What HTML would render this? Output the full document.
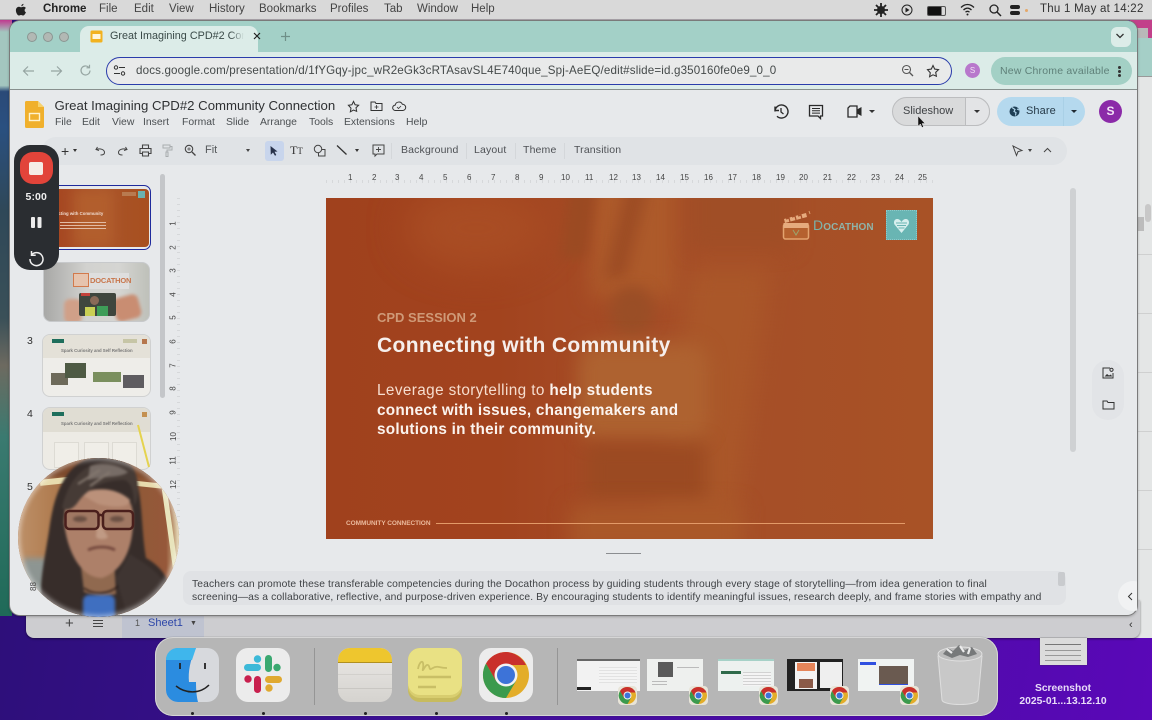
<!DOCTYPE html>
<html><head><meta charset="utf-8"><style>
html,body{margin:0;padding:0;width:1152px;height:720px;overflow:hidden;background:#3c0a9c;font-family:"Liberation Sans",sans-serif}
.a{position:absolute}
.t{position:absolute;white-space:nowrap}
svg{position:absolute;overflow:visible}
#root{filter:blur(.35px)}
</style></head><body>
<div id="root" class="a" style="left:0;top:0;width:1152px;height:720px;overflow:hidden">
<!-- wallpaper -->
<div class="a" style="left:0;top:20px;width:1152px;height:700px;background:linear-gradient(100deg,#2a0f74 0%,#3b0f92 40%,#5a08b8 100%)"></div>
<div class="a" style="left:1130px;top:20px;width:22px;height:40px;background:#c2408a"></div>
<div class="a" style="left:0;top:20px;width:12px;height:596px;background:linear-gradient(180deg,#c0398f 0,#a3c6bf 2%,#a3c6bf 11%,#2a4a78 12%,#2a5080 18%,#2f4858 32%,#3a5058 50%,#6d6a60 58%,#3a7a70 70%,#1f6a58 100%)"></div>
<!-- back windows -->
<div class="a" style="left:1130px;top:38px;width:22px;height:600px;background:#e4e6e6;border-radius:8px 0 0 0"></div>
<div class="a" style="left:1130px;top:28px;width:18px;height:10px;background:#b9b9b9"></div>
<div class="a" style="left:1130px;top:38px;width:22px;height:38px;background:#a5cfc7"></div>
<div class="a" style="left:1130px;top:76px;width:22px;height:1px;background:#999"></div>
<div class="a" style="left:1138px;top:217px;width:6px;height:14px;background:#bcbcbc"></div>
<div class="a" style="left:1145px;top:204px;width:6px;height:18px;background:#c8c8c8;border-radius:3px"></div>
<div class="a" style="left:1138px;top:196px;width:14px;height:400px;background:repeating-linear-gradient(transparent 0 58px,#cfd0d0 58px 59px)"></div>
<div class="a" style="left:26px;top:600px;width:1114px;height:38px;background:#cdcdd0;border-radius:0 0 8px 8px;box-shadow:0 1px 2px #0007"></div>
<div class="a" style="left:122px;top:612px;width:82px;height:26px;background:#bfc3d0"></div>
<div class="t" style="left:65px;top:615px;font-size:15px;color:#444">+</div>
<div class="a" style="left:93px;top:620px;width:10px;height:1px;background:#444;box-shadow:0 3px 0 #444,0 6px 0 #444"></div>
<div class="t" style="left:135px;top:618px;font-size:9px;color:#555">1</div>
<div class="t" style="left:148px;top:617px;font-size:11px;color:#2d46a8">Sheet1</div>
<div class="t" style="left:190px;top:620px;font-size:7px;color:#444">▼</div>
<div class="t" style="left:1129px;top:619px;font-size:11px;color:#333">‹</div>
<!-- menu bar -->
<div class="a" style="left:0;top:0;width:1152px;height:20px;background:#d9d9d9;border-bottom:1px solid #a9a2a8;box-sizing:border-box"></div>
<svg style="left:15px;top:3px" width="12" height="13" viewBox="0 0 12 14"><path d="M8.700 1c.1 1-.9 2.400-2.300 2.500C6.200 2.200 7.500 1 8.700 1zM11.300 10c-.6 1.600-1.800 3.500-3 3.500-.9 0-1.200-.6-2.300-.6s-1.400.6-2.300.6C2.200 13.500.5 10.500.5 8c0-2.500 1.600-4 3.200-4 1 0 1.800.6 2.400.6.600 0 1.500-.7 2.700-.6.500 0 1.800.2 2.500 1.400-2 1.300-1.700 3.800 0 4.600z" fill="#222"/></svg>
<div class="t" style="left:43px;top:3px;font-size:11.500px;font-weight:bold;color:#222">Chrome</div>
<div class="t" style="left:99px;top:3px;font-size:11.500px;color:#444">File</div>
<div class="t" style="left:134px;top:3px;font-size:11.500px;color:#444">Edit</div>
<div class="t" style="left:169px;top:3px;font-size:11.500px;color:#444">View</div>
<div class="t" style="left:209px;top:3px;font-size:11.500px;color:#444">History</div>
<div class="t" style="left:259px;top:3px;font-size:11.500px;color:#444">Bookmarks</div>
<div class="t" style="left:330px;top:3px;font-size:11.500px;color:#444">Profiles</div>
<div class="t" style="left:384px;top:3px;font-size:11.500px;color:#444">Tab</div>
<div class="t" style="left:417px;top:3px;font-size:11.500px;color:#444">Window</div>
<div class="t" style="left:471px;top:3px;font-size:11.500px;color:#444">Help</div>
<svg style="left:872px;top:1px" width="18" height="18" viewBox="0 0 18 18"><circle cx="9" cy="9" r="4" fill="#222"/><path d="M9 2v14M2 9h14M4 4l10 10M14 4L4 14" stroke="#222" stroke-width="1.800"/></svg>
<svg style="left:900px;top:3px" width="14" height="14" viewBox="0 0 14 14"><circle cx="7" cy="7" r="5" fill="none" stroke="#222" stroke-width="1"/><path d="M5.500 4.500l4 2.500-4 2.500z" fill="#222"/></svg>
<div class="a" style="left:927px;top:6px;width:17px;height:8px;border:1px solid #555;border-radius:2px;background:linear-gradient(90deg,#111 80%,transparent 80%)"></div>
<svg style="left:960px;top:3px" width="15" height="13" viewBox="0 0 15 13"><path d="M1 4.500c4-4 9-4 13 0M3.500 7c2.500-2.500 5.500-2.500 8 0M5.500 9.200c1.300-1.200 2.700-1.200 4 0" fill="none" stroke="#222" stroke-width="1.300"/><circle cx="7.500" cy="11.500" r="1" fill="#222"/></svg>
<svg style="left:988px;top:3px" width="14" height="14" viewBox="0 0 14 14"><circle cx="6" cy="6" r="4" fill="none" stroke="#222" stroke-width="1.300"/><path d="M9 9l4 4" stroke="#222" stroke-width="1.500"/></svg>
<div class="a" style="left:1010px;top:5px;width:10px;height:4px;background:#222;border-radius:2px"></div>
<div class="a" style="left:1010px;top:11px;width:10px;height:4px;background:#222;border-radius:2px"></div>
<div class="a" style="left:1025px;top:9px;width:3px;height:3px;background:#e5a86a;border-radius:50%"></div>
<div class="t" style="left:1040px;top:3px;font-size:11.500px;color:#333;letter-spacing:.25px">Thu 1 May at  14:22</div>
<!-- chrome window -->
<div class="a" style="left:10px;top:21px;width:1127px;height:594px;border-radius:10px;background:#e7e9eb;box-shadow:0 0 0 1px #7a7a7a,0 1px 3px #0006;overflow:hidden">
 <div class="a" style="left:0;top:0;width:1127px;height:31px;background:#a3d0c7"></div>
 <div class="a" style="left:0;top:31px;width:1127px;height:37px;background:#dcece8;border-bottom:1px solid #88908e"></div>
 <div class="a" style="left:70px;top:5px;width:178px;height:27px;background:#dcece8;border-radius:9px 9px 0 0"></div>
 <div class="a" style="left:1101px;top:6px;width:20px;height:20px;background:#dcece8;border-radius:6px"></div>
</div>
<div class="a" style="left:27px;top:31.500px;width:10px;height:10px;border-radius:50%;background:#b2b8b4;border:1px solid #8b9692;box-sizing:border-box"></div>
<div class="a" style="left:43px;top:31.500px;width:10px;height:10px;border-radius:50%;background:#b2b8b4;border:1px solid #8b9692;box-sizing:border-box"></div>
<div class="a" style="left:59px;top:31.500px;width:10px;height:10px;border-radius:50%;background:#b2b8b4;border:1px solid #8b9692;box-sizing:border-box"></div>
<svg style="left:90px;top:30px" width="13" height="13" viewBox="0 0 13 13"><rect x=".5" y=".5" width="12" height="12" rx="1.500" fill="#f2b21f"/><rect x="2.500" y="4" width="8" height="5" fill="#fff6dc"/></svg>
<div class="t" style="left:110px;top:30px;font-size:10.800px;color:#3a4a48;width:134px;overflow:hidden;-webkit-mask-image:linear-gradient(90deg,#000 90%,transparent)">Great Imagining CPD#2 Community</div>
<svg style="left:252.500px;top:32px" width="8" height="8" viewBox="0 0 8 8"><path d="M1 1l6 6M7 1L1 7" stroke="#222" stroke-width="1.200"/></svg>
<svg style="left:280px;top:31px" width="11" height="11" viewBox="0 0 11 11"><path d="M5.500 1v9M1 5.500h9" stroke="#6f8f88" stroke-width="1.200"/></svg>
<svg style="left:1115px;top:32px" width="10" height="8" viewBox="0 0 10 8"><path d="M1.500 2l3.500 3.500L8.500 2" stroke="#333" fill="none" stroke-width="1.300"/></svg>
<!-- toolbar -->
<svg style="left:22px;top:65px" width="13" height="12" viewBox="0 0 13 12"><path d="M12 6H2M6 1.500L1.500 6 6 10.500" fill="none" stroke="#96a5a2" stroke-width="1.200"/></svg>
<svg style="left:50px;top:65px" width="13" height="12" viewBox="0 0 13 12"><path d="M1 6h10M7 1.500L11.500 6 7 10.500" fill="none" stroke="#96a5a2" stroke-width="1.200"/></svg>
<svg style="left:79px;top:64px" width="13" height="13" viewBox="0 0 13 13"><path d="M11 6.500a4.500 4.500 0 1 1-1.300-3.200M10.500 .8v3H7.500" fill="none" stroke="#96a5a2" stroke-width="1.200"/></svg>
<div class="a" style="left:106px;top:57px;width:846px;height:28px;background:#e9eaea;border:1px solid #2a3cab;border-radius:14px;box-sizing:border-box"></div>
<svg style="left:113px;top:65px" width="13" height="11" viewBox="0 0 13 11"><circle cx="3" cy="2.500" r="1.700" fill="none" stroke="#333"/><path d="M6 2.500h6M1 8.500h6" stroke="#333"/><circle cx="10" cy="8.500" r="1.700" fill="none" stroke="#333"/></svg>
<div class="t" style="left:136px;top:64px;font-size:11.600px;color:#454a4a;letter-spacing:.15px">docs.google.com/presentation/d/1fYGqy-jpc_wR2eGk3cRTAsavSL4E740que_Spj-AeEQ/edit#slide=id.g350160fe0e9_0_0</div>
<svg style="left:901px;top:64px" width="13" height="13" viewBox="0 0 13 13"><circle cx="5.500" cy="5.500" r="4" fill="none" stroke="#555" stroke-width="1.100"/><path d="M8.500 8.500l3.500 3.500" stroke="#555" stroke-width="1.300"/><path d="M3.500 5.500h4" stroke="#555"/></svg>
<svg style="left:926px;top:64px" width="14" height="14" viewBox="0 0 14 14"><path d="M7 1.500l1.700 3.600 3.800.5-2.800 2.700.7 3.900L7 10.800l-3.400 1.900.7-3.900L1.500 5.600l3.800-.5z" fill="none" stroke="#333" stroke-width="1.100"/></svg>
<div class="a" style="left:965px;top:63px;width:15px;height:15px;border-radius:50%;background:#b878cc;color:#f0e0f4;font-size:8px;text-align:center;line-height:15px">S</div>
<div class="a" style="left:991px;top:57px;width:141px;height:28px;border-radius:14px;background:#a3d0c5"></div>
<div class="t" style="left:1000px;top:65px;font-size:10.500px;color:#5f8079;letter-spacing:.2px">New Chrome available</div>
<div class="a" style="left:1118px;top:66px;width:3px;height:3px;border-radius:50%;background:#333;box-shadow:0 4px 0 #333,0 8px 0 #333"></div>
<!-- docs header -->
<svg style="left:25px;top:101px" width="19" height="27" viewBox="0 0 19 27"><path d="M1.500 0H13l6 6v19.500a1.500 1.500 0 0 1-1.500 1.500h-16A1.500 1.500 0 0 1 0 25.500V1.500A1.500 1.500 0 0 1 1.500 0z" fill="#f0b02c"/><path d="M13 0l6 6h-6z" fill="#f7d26c"/><rect x="4.500" y="12.500" width="10" height="7" fill="none" stroke="#fff3cf" stroke-width="1.400"/></svg>
<div class="t" style="left:54.500px;top:98px;font-size:13.200px;color:#2f3133">Great Imagining CPD#2 Community Connection</div>
<svg style="left:347px;top:100px" width="13" height="13" viewBox="0 0 14 14"><path d="M7 1.500l1.700 3.600 3.800.5-2.800 2.700.7 3.900L7 10.800l-3.400 1.900.7-3.900L1.500 5.600l3.800-.5z" fill="none" stroke="#333" stroke-width="1.100"/></svg>
<svg style="left:370px;top:100px" width="13" height="12" viewBox="0 0 13 12"><path d="M1 2h4l1 1.500h6V10.500H1z" fill="none" stroke="#333"/><path d="M6.500 5v4M4.500 7h4" stroke="#333" stroke-width=".8"/></svg>
<svg style="left:392px;top:100px" width="14" height="12" viewBox="0 0 14 12"><path d="M3.500 10.500a2.700 2.700 0 0 1-.3-5.400 3.800 3.800 0 0 1 7.200-.8 3.100 3.100 0 0 1 .4 6.200z" fill="none" stroke="#333"/><path d="M5 7l1.500 1.500L9 6" fill="none" stroke="#333" stroke-width=".8"/></svg>
<div class="t" style="left:55px;top:117px;font-size:10.400px;color:#4b4f52">File</div>
<div class="t" style="left:82px;top:117px;font-size:10.400px;color:#4b4f52">Edit</div>
<div class="t" style="left:112px;top:117px;font-size:10.400px;color:#4b4f52">View</div>
<div class="t" style="left:143px;top:117px;font-size:10.400px;color:#4b4f52">Insert</div>
<div class="t" style="left:182px;top:117px;font-size:10.400px;color:#4b4f52">Format</div>
<div class="t" style="left:226px;top:117px;font-size:10.400px;color:#4b4f52">Slide</div>
<div class="t" style="left:260px;top:117px;font-size:10.400px;color:#4b4f52">Arrange</div>
<div class="t" style="left:309px;top:117px;font-size:10.400px;color:#4b4f52">Tools</div>
<div class="t" style="left:344px;top:117px;font-size:10.400px;color:#4b4f52">Extensions</div>
<div class="t" style="left:406px;top:117px;font-size:10.400px;color:#4b4f52">Help</div>
<!-- top right -->
<svg style="left:772px;top:103px" width="17" height="17" viewBox="0 0 17 17"><path d="M2.500 8.500a6.500 6.500 0 1 1 2 4.700M2.500 3.500v4h4" fill="none" stroke="#2a2a2a" stroke-width="1.400" transform="translate(.5)"/><path d="M9 5v4l2.500 2" fill="none" stroke="#2a2a2a" stroke-width="1.300"/></svg>
<svg style="left:808px;top:104px" width="16" height="16" viewBox="0 0 16 16"><path d="M1.500 1.500h13v10.500h-2v2.500l-2.500-2.500H1.500z" fill="none" stroke="#2a2a2a" stroke-width="1.300"/><path d="M4 4.500h8M4 6.800h8M4 9.100h8" stroke="#2a2a2a"/></svg>
<svg style="left:847px;top:105px" width="16" height="13" viewBox="0 0 16 13"><path d="M3 1h7v11H1V3z" fill="none" stroke="#2a2a2a" stroke-width="1.300"/><path d="M10 4.500l4.500-2.500v9L10 8.500z" fill="#2a2a2a"/></svg>
<div class="a" style="left:869px;top:110px;border:3px solid transparent;border-top:3.500px solid #333"></div>
<div class="a" style="left:892px;top:97px;width:98px;height:29px;border-radius:15px;background:#d9dadb;border:1px solid #bcbdbf;box-sizing:border-box"></div>
<div class="a" style="left:965px;top:97px;width:25px;height:29px;border-radius:0 15px 15px 0;background:#e3e4e6;border:1px solid #bcbdbf;box-sizing:border-box"></div>
<div class="t" style="left:903px;top:105px;font-size:11px;color:#3f4245">Slideshow</div>
<div class="a" style="left:974px;top:110px;border:3px solid transparent;border-top:3.500px solid #333"></div>
<svg style="left:917px;top:115px" width="10" height="14" viewBox="0 0 10 14"><path d="M1 1v10l2.500-2 1.500 3.500 1.500-.7L5 8.500h3z" fill="#111" stroke="#ddd" stroke-width=".5"/></svg>
<div class="a" style="left:997px;top:97px;width:88px;height:29px;border-radius:15px;background:#b5d9ee"></div>
<div class="a" style="left:1063px;top:97px;width:1px;height:29px;background:#a9d0e6"></div>
<svg style="left:1009px;top:106px" width="11" height="11" viewBox="0 0 11 11"><circle cx="5.500" cy="5.500" r="5" fill="#1f3f55"/><path d="M3 1.500l3 2-1 2 2 1-.5 3M8 3l2 1" stroke="#b5d9ee" stroke-width="1.100" fill="none"/></svg>
<div class="t" style="left:1026px;top:105px;font-size:11px;color:#263a48;letter-spacing:.1px">Share</div>
<div class="a" style="left:1071px;top:110px;border:3px solid transparent;border-top:3.500px solid #1f2a32"></div>
<div class="a" style="left:1099px;top:100px;width:23px;height:23px;border-radius:50%;background:#8b2aa8;color:#f2e4f6;font-size:12px;font-weight:bold;text-align:center;line-height:23px">S</div>
<!-- format bar -->
<div class="a" style="left:42px;top:137px;width:1025px;height:28px;border-radius:14px;background:#e0e3e6"></div>
<div class="t" style="left:61px;top:143px;font-size:14px;color:#333">+</div>
<div class="a" style="left:73px;top:149px;border:2.500px solid transparent;border-top:3px solid #333"></div>
<svg style="left:95px;top:146px" width="11" height="10" viewBox="0 0 11 10"><path d="M2.500 1L1 3.500l3 1M1.500 3.500C5 2 9.500 3.500 9.500 6.500c0 2-2 2.500-4 2.500" fill="none" stroke="#444"/></svg>
<svg style="left:117px;top:146px" width="11" height="10" viewBox="0 0 11 10"><path d="M8.500 1L10 3.500l-3 1M9.500 3.500C6 2 1.500 3.500 1.500 6.500c0 2 2 2.500 4 2.500" fill="none" stroke="#444"/></svg>
<svg style="left:139px;top:144px" width="13" height="13" viewBox="0 0 13 13"><path d="M3.500 4V1h6v3M3.500 9.500H1V4.500h11v5H9.500M3.500 8h6v4h-6z" fill="none" stroke="#444" stroke-width="1.100"/></svg>
<svg style="left:162px;top:144px" width="11" height="13" viewBox="0 0 11 13"><path d="M1 1h7v3H1zM8 2.500h2V6H5v2M4 8h2v4.500H4z" fill="none" stroke="#a9acaf"/></svg>
<svg style="left:184px;top:144px" width="12" height="12" viewBox="0 0 12 12"><circle cx="5" cy="5" r="3.700" fill="none" stroke="#444" stroke-width="1.100"/><path d="M8 8l3.500 3.500" stroke="#444" stroke-width="1.300"/><path d="M3.200 5h3.600M5 3.200v3.600" stroke="#444" stroke-width=".7"/></svg>
<div class="t" style="left:205px;top:144px;font-size:11px;color:#55585b">Fit</div>
<div class="a" style="left:246px;top:149px;border:2.500px solid transparent;border-top:3px solid #444"></div>
<div class="a" style="left:265px;top:141px;width:19px;height:20px;border-radius:3px;background:#c8d5ec"></div>
<svg style="left:269px;top:145px" width="10" height="12" viewBox="0 0 10 12"><path d="M1.500 1l7 5.500-3 .3 1.800 3.200-1.300.7L4 7.500 1.800 9.800z" fill="#28324a"/></svg>
<div class="t" style="left:290px;top:143px;font-size:12px;color:#333;font-family:'Liberation Serif',serif">T<span style="font-size:9px">T</span></div>
<svg style="left:313px;top:144px" width="13" height="13" viewBox="0 0 13 13"><circle cx="5" cy="5" r="3.700" fill="none" stroke="#444"/><path d="M9 5.500h3v6.500H5.500V9" fill="none" stroke="#444"/></svg>
<svg style="left:336px;top:144px" width="12" height="12" viewBox="0 0 12 12"><path d="M1 1.500l9.500 9" stroke="#333" stroke-width="1.300"/></svg>
<div class="a" style="left:355px;top:149px;border:2.500px solid transparent;border-top:3px solid #333"></div>
<svg style="left:372px;top:144px" width="13" height="13" viewBox="0 0 13 13"><path d="M1 1h11v9H5l-2 2v-2H1z" fill="none" stroke="#444"/><path d="M6.500 3v5M4 5.500h5" stroke="#444" stroke-width=".9"/></svg>
<div class="a" style="left:391px;top:143px;width:1px;height:16px;background:#d4d7da"></div>
<div class="t" style="left:401px;top:144px;font-size:10.500px;color:#4e5155;letter-spacing:.15px">Background</div>
<div class="a" style="left:466px;top:143px;width:1px;height:16px;background:#d4d7da"></div>
<div class="t" style="left:474px;top:144px;font-size:10.500px;color:#4e5155;letter-spacing:.15px">Layout</div>
<div class="a" style="left:515px;top:143px;width:1px;height:16px;background:#d4d7da"></div>
<div class="t" style="left:523px;top:144px;font-size:10.500px;color:#4e5155;letter-spacing:.15px">Theme</div>
<div class="a" style="left:564px;top:143px;width:1px;height:16px;background:#d4d7da"></div>
<div class="t" style="left:574px;top:144px;font-size:10.500px;color:#4e5155;letter-spacing:.15px">Transition</div>
<svg style="left:1012px;top:145px" width="11" height="11" viewBox="0 0 11 11"><path d="M1 1l9 4.500-4 1.200L4.500 10.500z" fill="none" stroke="#444"/></svg>
<div class="a" style="left:1028px;top:149px;border:2.500px solid transparent;border-top:3px solid #444"></div>
<svg style="left:1043px;top:147px" width="9" height="6" viewBox="0 0 9 6"><path d="M1 5l3.500-3.500L8 5" fill="none" stroke="#444"/></svg>
<!-- rulers -->
<div class="a" style="left:326px;top:180px;width:607px;height:3px;background:repeating-linear-gradient(90deg,#d6d8da 0 1px,transparent 1px 6px)"></div>
<div class="t" style="left:348px;top:172.500px;font-size:8px;color:#444;width:600px"><span class="t" style="left:0">1</span><span class="t" style="left:24px">2</span><span class="t" style="left:47px">3</span><span class="t" style="left:71px">4</span><span class="t" style="left:95px">5</span><span class="t" style="left:119px">6</span><span class="t" style="left:143px">7</span><span class="t" style="left:167px">8</span><span class="t" style="left:191px">9</span><span class="t" style="left:213px">10</span><span class="t" style="left:237px">11</span><span class="t" style="left:261px">12</span><span class="t" style="left:284px">13</span><span class="t" style="left:308px">14</span><span class="t" style="left:332px">15</span><span class="t" style="left:356px">16</span><span class="t" style="left:380px">17</span><span class="t" style="left:404px">18</span><span class="t" style="left:428px">19</span><span class="t" style="left:451px">20</span><span class="t" style="left:475px">21</span><span class="t" style="left:499px">22</span><span class="t" style="left:523px">23</span><span class="t" style="left:547px">24</span><span class="t" style="left:570px">25</span></div>
<div class="a" style="left:177px;top:198px;width:3px;height:341px;background:repeating-linear-gradient(#d6d8da 0 1px,transparent 1px 6px)"></div>
<div class="t" style="left:166px;top:213px;font-size:8px;color:#444;height:300px">
<span class="t" style="left:5px;top:6px;transform:rotate(-90deg)">1</span><span class="t" style="left:5px;top:30px;transform:rotate(-90deg)">2</span><span class="t" style="left:5px;top:53px;transform:rotate(-90deg)">3</span><span class="t" style="left:5px;top:77px;transform:rotate(-90deg)">4</span><span class="t" style="left:5px;top:100px;transform:rotate(-90deg)">5</span><span class="t" style="left:5px;top:124px;transform:rotate(-90deg)">6</span><span class="t" style="left:5px;top:148px;transform:rotate(-90deg)">7</span><span class="t" style="left:5px;top:171px;transform:rotate(-90deg)">8</span><span class="t" style="left:5px;top:195px;transform:rotate(-90deg)">9</span><span class="t" style="left:3px;top:219px;transform:rotate(-90deg)">10</span><span class="t" style="left:3px;top:243px;transform:rotate(-90deg)">11</span><span class="t" style="left:3px;top:267px;transform:rotate(-90deg)">12</span></div>
<div class="a" style="left:160px;top:174px;width:5px;height:224px;border-radius:3px;background:#c4c6c9"></div>
<div class="a" style="left:1070px;top:188px;width:6px;height:264px;border-radius:3px;background:#cfd1d3"></div>
<!-- side tools -->
<div class="a" style="left:1092px;top:360px;width:32px;height:60px;border-radius:16px;background:#e2e4e7"></div>
<svg style="left:1102px;top:367px" width="13" height="12" viewBox="0 0 13 12"><path d="M8 1H1v10h10V6" fill="none" stroke="#333"/><circle cx="9.500" cy="2.800" r="1.600" fill="none" stroke="#333"/><path d="M2.500 9.500l2.500-2.500 2 1.500 2-1 1 2z" fill="#333"/></svg>
<svg style="left:1102px;top:400px" width="13" height="10" viewBox="0 0 13 10"><path d="M1 1h4l1 1.500h6V9H1z" fill="none" stroke="#333"/></svg>
<!-- slide -->
<div class="a" style="left:326px;top:198px;width:607px;height:341px;overflow:hidden;background:#a8481f">
 <div class="a" style="left:0;top:0;width:607px;height:341px;background:linear-gradient(90deg,#a0411d 0%,#a2431e 28%,#a64d27 50%,#a64f27 75%,#a85226 100%)"></div>
 <div class="a" style="left:80px;top:-10px;width:140px;height:80px;background:#a94d24;filter:blur(18px);border-radius:50%"></div>
 <div class="a" style="left:265px;top:-20px;width:85px;height:120px;background:#ad5a2a;filter:blur(10px)"></div>
 <div class="a" style="left:240px;top:-20px;width:26px;height:80px;background:#9b4a22;filter:blur(6px);transform:skewX(-8deg)"></div>
 <div class="a" style="left:290px;top:-20px;width:22px;height:100px;background:#9d4c24;filter:blur(7px);transform:skewX(-14deg)"></div>
 <div class="a" style="left:365px;top:-20px;width:100px;height:70px;background:#a04e26;filter:blur(10px)"></div>
 <div class="a" style="left:345px;top:70px;width:80px;height:280px;background:#aa5729;filter:blur(12px);transform:skewX(-8deg)"></div>
 <div class="a" style="left:284px;top:88px;width:44px;height:50px;background:#9a4e26;filter:blur(7px);border-radius:50%"></div>
 <div class="a" style="left:252px;top:145px;width:130px;height:98px;background:#ae6230;filter:blur(9px);border-radius:20px"></div>
 <div class="a" style="left:260px;top:245px;width:120px;height:58px;background:#9b4a22;filter:blur(9px)"></div>
 <div class="a" style="left:245px;top:308px;width:170px;height:45px;background:#aa5829;filter:blur(10px)"></div>
 <!-- logo -->
 <svg style="left:456px;top:12px" width="30" height="30" viewBox="0 0 30 30"><path d="M2 9l22-6 1 4L3 13z" fill="#e6ab7e"/><path d="M4 9l3-1 1 4M10 7l3-1 1 4M16 6l3-1 1 4" stroke="#a8512a" stroke-width="1.300" fill="none"/><rect x="1.500" y="14" width="25" height="15" rx="2" fill="#b5612f" stroke="#e3a36f" stroke-width="1.500"/><rect x="1.500" y="13" width="25" height="5" fill="#e6ab7e"/><path d="M11 20l3 5 3-5" stroke="#9aa46c" fill="none"/><path d="M27 1l1 3" stroke="#d9a070"/></svg>
 <div class="t" style="left:487px;top:19px;font-size:14px;color:#79b2aa;letter-spacing:.1px">D<span style="font-size:10px;font-weight:bold;color:#8fb3a8">OCATHON</span></div>
 <div class="a" style="left:560px;top:12px;width:31px;height:30px;background:#69b5b3;border:1px dotted #8ecaca;box-sizing:border-box"></div>
 <svg style="left:566px;top:18px" width="19" height="19" viewBox="0 0 19 19"><path d="M9.500 17L2.500 8.500C1 5.500 3 2.500 5.500 3 7.500 3.200 9 5 9.500 6 10 5 11.500 3.200 13.500 3 16 2.500 18 5.500 16.500 8.500z" fill="#d7efee"/><path d="M4 7h11M5 9.500h9M6.500 12h6" stroke="#69b5b3"/></svg>
 <!-- text -->
 <div class="t" style="left:51px;top:112px;font-size:13px;font-weight:bold;color:#cf9a78">CPD SESSION 2</div>
 <div class="t" style="left:51px;top:136px;font-size:21px;font-weight:bold;color:#f6efec;letter-spacing:.36px">Connecting with Community</div>
 <div class="t" style="left:51px;top:184px;font-size:15.300px;color:#f6ddce;letter-spacing:.4px">Leverage storytelling to <b style="color:#fbf3ee;letter-spacing:.3px">help students</b></div>
 <div class="t" style="left:51px;top:203.500px;font-size:15.300px;font-weight:bold;color:#fbf3ee;letter-spacing:.24px">connect with issues, changemakers and</div>
 <div class="t" style="left:51px;top:223px;font-size:15.300px;font-weight:bold;color:#fbf3ee;letter-spacing:.24px">solutions in their community.</div>
 <div class="t" style="left:20px;top:321.500px;font-size:6.500px;font-weight:bold;color:#eab99c;letter-spacing:-.05px">COMMUNITY CONNECTION</div>
 <div class="a" style="left:110px;top:325px;width:469px;height:1px;background:#e39a68"></div>
</div>
<!-- thumbs -->
<div class="a" style="left:42px;top:185px;width:109px;height:65px;border:1.500px solid #1f2a9c;border-radius:7px;box-sizing:border-box;background:#e7e9eb"></div>
<div class="a" style="left:44px;top:189px;width:105px;height:58px;border-radius:4px;overflow:hidden;background:linear-gradient(90deg,#a6441f,#a9532a 55%,#a8501f)">
 <div class="a" style="left:30px;top:0;width:40px;height:58px;background:#b25e2d;filter:blur(6px)"></div>
 <div class="t" style="left:1px;top:21.500px;font-size:4.300px;font-weight:bold;color:#f0dcd0">Connecting with Community</div>
 <div class="a" style="left:16px;top:33px;width:46px;height:1px;background:#e2bba5;box-shadow:0 3px 0 #e2bba5,0 6px 0 #e2bba5"></div>
 <div class="a" style="left:94px;top:2px;width:7px;height:7px;background:#6ab2ae"></div>
 <div class="a" style="left:78px;top:3px;width:14px;height:4px;background:#b87a50"></div>
</div>
<!-- thumb 2 -->
<div class="a" style="left:43px;top:262px;width:107px;height:60px;border:1.500px solid #c7c9cb;border-radius:8px;box-sizing:border-box;background:#c9c9c6;overflow:hidden">
 <div class="a" style="left:0;top:0;width:107px;height:60px;background:linear-gradient(90deg,#a8a8a6,#d2d2cf 40%,#d5d5d2 70%,#bdbfb8)"></div>
 <div class="a" style="left:29px;top:10px;width:16px;height:14px;border:1.500px solid #d27a4c;box-sizing:border-box;background:#e6c4ae"></div>
 <div class="a" style="left:45px;top:10px;width:40px;height:16px;background:#dedede"></div>
 <div class="t" style="left:46px;top:13px;font-size:7.500px;color:#c8764c;font-weight:bold;letter-spacing:-.2px">DOCATHON</div>
 <div class="a" style="left:20px;top:36px;width:18px;height:24px;background:#d0a088;filter:blur(1.500px);border-radius:6px"></div>
 <div class="a" style="left:70px;top:33px;width:26px;height:24px;background:#c98d72;filter:blur(1.500px);border-radius:6px;transform:rotate(-15deg)"></div>
 <div class="a" style="left:35px;top:30px;width:37px;height:23px;background:#3f463e;border-radius:2px"></div>
 <div class="a" style="left:41px;top:44px;width:10px;height:9px;background:#c9cf54"></div>
 <div class="a" style="left:53px;top:43px;width:11px;height:10px;background:#3e9d58"></div>
 <div class="a" style="left:46px;top:33px;width:9px;height:9px;background:#8a6a58;border-radius:50%"></div>
 <div class="a" style="left:37px;top:30px;width:9px;height:3px;background:#c2413a"></div>
</div>
<div class="t" style="left:27px;top:335px;font-size:10.500px;color:#333">3</div>
<div class="a" style="left:42px;top:334px;width:109px;height:63px;border:1.500px solid #d0d1d1;border-radius:8px;box-sizing:border-box;background:#eeede9;overflow:hidden">
 <div class="a" style="left:0;top:0;width:109px;height:23px;background:#e4e1d8"></div>
 <div class="a" style="left:9px;top:4px;width:12px;height:4px;background:#1e6e5c"></div>
 <div class="a" style="left:99px;top:4px;width:5px;height:5px;background:#b5764c"></div>
 <div class="a" style="left:80px;top:4px;width:14px;height:4px;background:#c6c5a6"></div>
 <div class="t" style="left:18px;top:13px;font-size:4.300px;color:#777;font-weight:bold">Spark Curiosity and Self Reflection</div>
 <div class="a" style="left:8px;top:38px;width:17px;height:12px;background:#6d6a5a"></div>
 <div class="a" style="left:22px;top:28px;width:21px;height:15px;background:#4e5a44"></div>
 <div class="a" style="left:50px;top:37px;width:28px;height:10px;background:#7a8f5e"></div>
 <div class="a" style="left:80px;top:40px;width:21px;height:13px;background:#5e5c60"></div>
</div>
<div class="t" style="left:27px;top:408px;font-size:10.500px;color:#333">4</div>
<div class="a" style="left:42px;top:407px;width:109px;height:63px;border:1.500px solid #d0d1d1;border-radius:8px;box-sizing:border-box;background:#edebe5;overflow:hidden">
 <div class="a" style="left:0;top:0;width:109px;height:24px;background:#e0ddd3"></div>
 <div class="a" style="left:9px;top:4px;width:12px;height:4px;background:#1e6e5c"></div>
 <div class="a" style="left:99px;top:4px;width:5px;height:5px;background:#c49050"></div>
 <div class="t" style="left:18px;top:13px;font-size:4.300px;color:#777;font-weight:bold">Spark Curiosity and Self Reflection</div>
 <div class="a" style="left:12px;top:35px;width:23px;height:24px;background:#f0eee8;box-shadow:0 0 0 1px #dddbd4"></div>
 <div class="a" style="left:42px;top:35px;width:23px;height:24px;background:#f0eee8;box-shadow:0 0 0 1px #dddbd4"></div>
 <div class="a" style="left:70px;top:35px;width:23px;height:24px;background:#f0eee8;box-shadow:0 0 0 1px #dddbd4"></div>
</div>
<svg style="left:136px;top:425px" width="16" height="45" viewBox="0 0 16 45"><path d="M2 0L13 42" stroke="#e5d34e" stroke-width="2"/></svg>
<!-- recording widget -->
<div class="a" style="left:14px;top:145px;width:45px;height:125px;border-radius:16px;background:#2a2d31"></div>
<div class="a" style="left:20px;top:152px;width:33px;height:32px;border-radius:13px;background:#e2443a"></div>
<div class="a" style="left:29px;top:162px;width:14px;height:13px;border-radius:2px;background:#f5ece6"></div>
<div class="t" style="left:25.500px;top:191px;font-size:10.500px;font-weight:bold;color:#f0f0f0;letter-spacing:.1px">5:00</div>
<div class="a" style="left:31px;top:217px;width:4px;height:11px;border-radius:1px;background:#ececec;box-shadow:6.500px 0 0 #ececec"></div>
<svg style="left:28px;top:249px" width="17" height="18" viewBox="0 0 17 18"><path d="M3.500 6a6.500 6.500 0 1 1-1.500 4M3.500 2v4.200h4.200" fill="none" stroke="#efefef" stroke-width="1.500"/></svg>
<!-- notes -->
<div class="a" style="left:606px;top:553px;width:35px;height:1px;background:#8b8d90"></div>
<div class="a" style="left:183px;top:571px;width:883px;height:34px;border-radius:8px;background:#e0e2e5"></div>
<div class="a" style="left:1058px;top:572px;width:7px;height:14px;background:#c9cbce;border-radius:2px"></div>
<div class="t" style="left:192px;top:579px;font-size:10.300px;color:#3f4245;letter-spacing:.12px">Teachers can promote these transferable competencies during the Docathon process by guiding students through every stage of storytelling—from idea generation to final</div>
<div class="t" style="left:192px;top:592px;font-size:10.300px;color:#3f4245;letter-spacing:.12px">screening—as a collaborative, reflective, and purpose-driven experience. By encouraging students to identify meaningful issues, research deeply, and frame stories with empathy and</div>
<div class="a" style="left:1118px;top:581px;width:30px;height:30px;border-radius:50%;background:#f1f2f3;clip-path:inset(0 11px 0 0)"></div>
<svg style="left:1127px;top:592px" width="6" height="9" viewBox="0 0 6 9"><path d="M5 1L1.500 4.500 5 8" fill="none" stroke="#333"/></svg>
<!-- webcam -->
<div class="a" style="left:18px;top:458px;width:161px;height:159px;border-radius:50%;overflow:hidden;background:#a9764e">
 <div class="a" style="left:0;top:0;width:161px;height:159px;background:linear-gradient(90deg,#bd9068 0%,#b07c50 22%,#8f5a37 70%,#96583a 92%,#dccb9e 100%)"></div>
 <div class="a" style="left:0;top:0;width:161px;height:20px;background:#7d4a2c;filter:blur(2px)"></div>
 <div class="a" style="left:22px;top:20px;width:36px;height:6px;background:#e8dcae;transform:rotate(-6deg)"></div>
 <div class="a" style="left:118px;top:25px;width:40px;height:5px;background:#e8dcae;transform:rotate(6deg)"></div>
 <div class="a" style="left:150px;top:30px;width:5px;height:90px;background:#e8e4bc;transform:rotate(-8deg)"></div>
 <div class="a" style="left:5px;top:100px;width:30px;height:40px;background:#8d9592;filter:blur(3px)"></div>
 <svg style="left:0;top:0;filter:blur(1.200px)" width="161" height="159" viewBox="0 0 161 159">
  <!-- back hair -->
  <path d="M66 2C44 14 36 40 32 66 28 96 20 125 24 150L40 165H140C158 150 160 118 128 100 122 66 126 30 112 6 100-2 78-4 66 2z" fill="#372d2a"/>
  <!-- shoulder hair, right -->
  <path d="M112 96C130 108 150 118 148 138 140 150 125 160 110 160L98 120z" fill="#3f3532"/>
  <!-- neck -->
  <path d="M62 100H96L98 136 84 140 66 134z" fill="#90694f"/>
  <!-- face -->
  <path d="M47 52C50 38 72 34 92 34 108 34 115 44 115 58 116 84 108 112 84 120 62 120 49 92 46 64z" fill="#ad8069"/>
  <path d="M62 36C78 28 100 30 112 42 112 50 96 50 80 46z" fill="#bb917a"/>
  <!-- fringe and crown -->
  <path d="M98 2C74 2 52 14 44 50 50 54 56 50 60 44 70 30 86 22 106 22 114 24 116 36 116 48 122 40 122 16 112 6z" fill="#463b36"/>
  <path d="M72 8C84 4 100 6 110 14 104 20 84 18 70 22z" fill="#776c66"/>
  <path d="M60 26L82 12M72 28L92 14" stroke="#84786f" stroke-width="2" fill="none"/>
  <!-- brows/eyes/nose/mouth -->
  <path d="M72 58h0" stroke="#000"/>
  <ellipse cx="62" cy="61" rx="7" ry="3" fill="#5b4238"/>
  <ellipse cx="99" cy="61" rx="7" ry="3" fill="#5b4238"/>
  <path d="M80 62L78 78C78 82 88 82 90 79" fill="#c09a84"/>
  <path d="M70 92C78 88 90 88 97 92" stroke="#6e4238" stroke-width="2.500" fill="none"/>
  <!-- necklace -->
  <path d="M66 130C76 138 92 136 100 128" stroke="#221513" stroke-width="1.400" fill="none"/>
 </svg>
 <svg style="left:0;top:0" width="161" height="159" viewBox="0 0 161 159"><rect x="47.500" y="53" width="33" height="18" rx="4" fill="#8a6a5a" fill-opacity=".35" stroke="#4a1f1c" stroke-width="2.500"/><rect x="85" y="53" width="30" height="18" rx="4" fill="#8a6a5a" fill-opacity=".35" stroke="#4a1f1c" stroke-width="2.500"/><path d="M80 58c2-1.500 3-1.500 5 0" stroke="#4a1f1c" stroke-width="2.500" fill="none"/></svg>
 <div class="a" style="left:65px;top:137px;width:32px;height:26px;background:#3f6fc0;filter:blur(1.500px);border-radius:6px"></div>
 <div class="a" style="left:0;top:0;width:161px;height:159px;border-radius:50%;box-shadow:inset 0 0 5px 2px #ffffff70"></div>
</div>
<div class="t" style="left:27px;top:481px;font-size:10.500px;color:#333">5</div>
<div class="t" style="left:29px;top:582px;font-size:8px;color:#444;transform:rotate(-90deg)">88</div>
<!-- dock -->
<div class="a" style="left:155px;top:637px;width:843px;height:79px;border-radius:18px;background:#b6b6b6;box-shadow:inset 0 0 0 1px #d6d6d6,0 0 1px #3338"></div>
<!-- finder -->
<div class="a" style="left:166px;top:648px;width:53px;height:54px;border-radius:12px;overflow:hidden;background:#d7d9dd">
 <svg style="left:0;top:0" width="53" height="54" viewBox="0 0 53 54"><path d="M0 0h30C24 12 22 24 23 34h7c0 8 .5 14 2 20H0z" fill="#2b8ce0"/><path d="M0 0h30l-4 12H0z" fill="#3fb6ec"/><path d="M14 15v6M39 15v6" stroke="#222" stroke-width="1.800"/><path d="M10 38c10 8 24 8 33-1" fill="none" stroke="#222" stroke-width="1.500"/></svg>
</div>
<!-- slack -->
<div class="a" style="left:236px;top:648px;width:54px;height:54px;border-radius:12px;background:#ececec"></div>
<svg style="left:243px;top:654px" width="40" height="40" viewBox="0 0 40 40"><rect x="1" y="10" width="17" height="7" rx="3.500" fill="#3cb9d8"/><circle cx="14.500" cy="5" r="3.700" fill="#3cb9d8"/><rect x="22" y="1" width="7" height="17" rx="3.500" fill="#3aa870"/><circle cx="34" cy="13.500" r="3.700" fill="#3aa870"/><rect x="22" y="22" width="17" height="7" rx="3.500" fill="#e0a930"/><circle cx="26" cy="34" r="3.700" fill="#e0a930"/><rect x="11" y="22" width="7" height="17" rx="3.500" fill="#c8204e"/><circle cx="5" cy="25" r="3.700" fill="#c8204e"/></svg>
<div class="a" style="left:314px;top:648px;width:1px;height:57px;background:#959595"></div>
<!-- notes -->
<div class="a" style="left:338px;top:648px;width:54px;height:54px;border-radius:12px;overflow:hidden;background:linear-gradient(#ebe9e6,#d5d3cf)">
 <div class="a" style="left:0;top:0;width:54px;height:14px;background:#eec62e"></div>
 <div class="a" style="left:0;top:14px;width:54px;height:1px;background:#b09020"></div>
 <div class="a" style="left:0;top:26px;width:54px;height:1px;background:#d2d0cc"></div>
 <div class="a" style="left:0;top:40px;width:54px;height:1px;background:#c9c7c3"></div>
</div>
<!-- stickies -->
<div class="a" style="left:408px;top:648px;width:54px;height:54px;border-radius:12px;background:#c7bb5e"></div>
<div class="a" style="left:408px;top:648px;width:54px;height:47px;border-radius:12px;background:#e9e184;box-shadow:0 3px 0 #d8cd6f"></div>
<svg style="left:414px;top:654px" width="40" height="34" viewBox="0 0 40 34"><path d="M4 15c1-6 4-9 5-6 1 4-1 8 0 7s3-6 5-5 1 5 3 4 4-3 8-2 6 1 8 1" fill="none" stroke="#c9bf66" stroke-width="1.800"/><path d="M4 23h33" stroke="#c9bf66" stroke-width="2.500"/><path d="M4 33h18" stroke="#c9bf66" stroke-width="2.500"/></svg>
<!-- chrome -->
<div class="a" style="left:479px;top:648px;width:54px;height:54px;border-radius:12px;background:#ececec"></div>
<svg style="left:482px;top:651px" width="48" height="48" viewBox="0 0 48 48"><circle cx="24" cy="24" r="23" fill="#e3ad29"/><path d="M24 1A23 23 0 0 0 4 12.500L14 30 24 14h20A23 23 0 0 0 24 1z" fill="#c9302c"/><path d="M4 12.500A23 23 0 0 0 24 47L34 30H14z" fill="#3b9a4d"/><circle cx="24" cy="24" r="11.500" fill="#f2f2f2"/><circle cx="24" cy="24" r="9" fill="#3d73d8"/></svg>
<div class="a" style="left:191px;top:712px;width:3px;height:3px;border-radius:50%;background:#222;box-shadow:71px 0 0 #222,173px 0 0 #222,244px 0 0 #222,314px 0 0 #222"></div>
<div class="a" style="left:557px;top:648px;width:1px;height:57px;background:#959595"></div>
<!-- minimized windows -->
<div class="a" style="left:577px;top:659px;width:63px;height:32px;background:#f2f2f2"><div class="a" style="left:0;top:0;width:63px;height:2px;background:#666"></div><div class="a" style="left:0;top:28px;width:14px;height:3px;background:#222"></div><div class="a" style="left:22px;top:8px;width:38px;height:16px;background:repeating-linear-gradient(#e2e2e2 0 1px,#f4f4f4 1px 3px)"></div></div>
<div class="a" style="left:647px;top:659px;width:56px;height:32px;background:#eef0ee"><div class="a" style="left:11px;top:3px;width:15px;height:15px;background:#5a5a5a"></div><div class="a" style="left:30px;top:8px;width:22px;height:1px;background:#bbb"></div><div class="a" style="left:5px;top:22px;width:15px;height:1px;background:#bbb;box-shadow:0 3px 0 #bbb"></div></div>
<div class="a" style="left:718px;top:659px;width:56px;height:32px;background:#edf1ef"><div class="a" style="left:0;top:0;width:56px;height:2px;background:#a6d1c7"></div><div class="a" style="left:3px;top:12px;width:20px;height:3px;background:#2f6a4a"></div><div class="a" style="left:25px;top:13px;width:28px;height:14px;background:repeating-linear-gradient(#d2d2d2 0 1px,#f4f4f4 1px 3px)"></div></div>
<div class="a" style="left:787px;top:659px;width:56px;height:32px;background:#222"><div class="a" style="left:8px;top:3px;width:22px;height:27px;background:#f3f3f3"></div><div class="a" style="left:10px;top:4px;width:18px;height:8px;background:#e5855a"></div><div class="a" style="left:12px;top:20px;width:14px;height:9px;background:#8a5a48"></div><div class="a" style="left:33px;top:3px;width:22px;height:26px;background:#efefef"></div></div>
<div class="a" style="left:858px;top:659px;width:56px;height:32px;background:#f0f3f2"><div class="a" style="left:2px;top:3px;width:16px;height:3px;background:#3050e0"></div><div class="a" style="left:21px;top:7px;width:29px;height:18px;background:#6a5a50;border-bottom:1px solid #3050e0"></div></div>
<svg width="0" height="0" style="left:0;top:0"><defs><g id="cr"><rect x="0" y="0" width="19" height="19" rx="4" fill="#e8e4d8"/><circle cx="9.500" cy="9.500" r="8.500" fill="#e3ad29"/><path d="M9.500 1A8.500 8.500 0 0 0 2 5l4 7 3.500-5.500H17.500A8.500 8.500 0 0 0 9.500 1z" fill="#c9302c"/><path d="M2 5a8.500 8.500 0 0 0 7.500 13l3.500-6H6z" fill="#3b9a4d"/><circle cx="9.500" cy="9.500" r="4" fill="#f2f2f2"/><circle cx="9.500" cy="9.500" r="3" fill="#3d73d8"/></g></defs></svg>
<svg style="left:618px;top:686px" width="19" height="19"><use href="#cr"/></svg>
<svg style="left:689px;top:686px" width="19" height="19"><use href="#cr"/></svg>
<svg style="left:759px;top:686px" width="19" height="19"><use href="#cr"/></svg>
<svg style="left:830px;top:686px" width="19" height="19"><use href="#cr"/></svg>
<svg style="left:900px;top:686px" width="19" height="19"><use href="#cr"/></svg>
<!-- trash -->
<svg style="left:935px;top:642px" width="50" height="64" viewBox="0 0 50 64"><path d="M3 14c0-2 44-2 44 0l-4 44c-1 6-35 6-36 0z" fill="#c8c8c8" stroke="#dedede"/><ellipse cx="25" cy="12" rx="22" ry="7" fill="#bdbdbd" stroke="#e0e0e0"/><path d="M8 12l5-6 5 3 6-6 6 5 7-3 5 7-9 3-8-2-8 3z" fill="#77797a"/><path d="M12 7l5 4M25 4l4 6M35 6l-2 6" stroke="#ececec" stroke-width="2.200"/></svg>
<!-- desktop file -->
<div class="a" style="left:1040px;top:638px;width:47px;height:27px;background:#dcdcdc;box-shadow:0 0 1px #333"><div class="a" style="left:5px;top:6px;width:36px;height:1px;background:#777;box-shadow:0 6px 0 #999,0 11px 0 #999,0 16px 0 #999"></div></div>
<div class="t" style="left:1013px;top:683px;width:100px;text-align:center;font-size:10.300px;font-weight:bold;color:#e8dcf8">Screenshot</div>
<div class="t" style="left:1013px;top:695.500px;width:100px;text-align:center;font-size:10.300px;font-weight:bold;color:#e8dcf8;letter-spacing:.05px">2025-01...13.12.10</div>
</div>
</body></html>
